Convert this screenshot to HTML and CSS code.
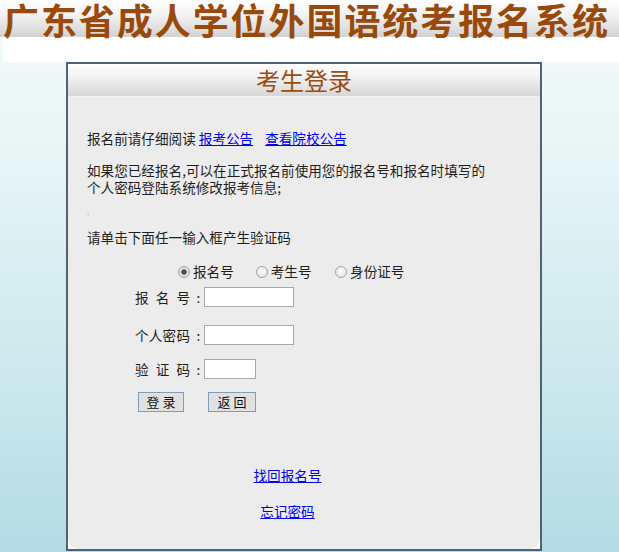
FILE: index.html
```html
<!DOCTYPE html>
<html lang="zh-CN">
<head>
<meta charset="utf-8">
<title>广东省成人学位外国语统考报名系统</title>
<link rel="stylesheet" href="styles.css">
</head>
<body>
<div class="page">
  <div class="banner"><h1 class="title">广东省成人学位外国语统考报名系统</h1></div>
  <div class="strip"></div>
  <div class="box">
    <div class="box-head">考生登录</div>
    <div class="box-body">
      <p class="line first">报名前请仔细阅读 <a href="#">报考公告</a><span class="sp"></span><a href="#">查看院校公告</a></p>
      <p class="line intro">如果您已经报名,可以在正式报名前使用您的报名号和报名时填写的<br>个人密码登陆系统修改报考信息;</p>
      <p class="line dot">.</p>
      <p class="line hint">请单击下面任一输入框产生验证码</p>
      <div class="radios">
        <label class="radio"><input type="radio" name="t" checked><span>报名号</span></label>
        <label class="radio"><input type="radio" name="t"><span>考生号</span></label>
        <label class="radio r3"><input type="radio" name="t"><span>身份证号</span></label>
      </div>
      <div class="field f1">
        <span class="lbl">报名号</span><span class="colon">:</span><input class="txt" type="text">
      </div>
      <div class="field f2">
        <span class="lbl">个人密码</span><span class="colon">:</span><input class="txt" type="password">
      </div>
      <div class="field f3">
        <span class="lbl">验证码</span><span class="colon">:</span><input class="txt short" type="text">
      </div>
      <div class="btns">
        <button class="btn" type="button">登 录</button>
        <button class="btn wide" type="button">返 回</button>
      </div>
      <div class="links">
        <a href="#" class="l1">找回报名号</a>
        <a href="#" class="l2">忘记密码</a>
      </div>
    </div>
  </div>
</div>
</body>
</html>
```
FILE: styles.css
```css
html, body {
  margin: 0;
  padding: 0;
}
body {
  width: 619px;
  height: 552px;
  overflow: hidden;
  background: linear-gradient(#f6fbfb 0%, #e6f4f5 30%, #c6e6ec 75%, #b4dbe5 100%);
  font-family: "Noto Sans CJK SC", "Noto Sans", sans-serif;
  font-size: 13.6px;
  color: #1e1e1e;
}
.banner {
  height: 37px;
  box-sizing: border-box;
  padding-top: 1px;
  background: linear-gradient(#ffffff 0%, #f2f2f2 40%, #d2d2d2 100%);
}
.title {
  margin: 0 0 0 3px;
  width: 605px;
  font-size: 36px;
  line-height: 37px;
  height: 37px;
  font-weight: 700;
  color: #994a0a;
  text-align: justify;
  text-align-last: justify;
}
.strip {
  height: 25px;
  margin-left: 3px;
  background: #ffffff;
}
.box {
  margin-left: 66px;
  width: 472px;
  border: 2px solid #526173;
  background: #ffffff;
}
.box-head {
  height: 32px;
  line-height: 32px;
  text-align: center;
  font-size: 24px;
  color: #9e4b0e;
  background: linear-gradient(#ffffff 0%, #f0f0f0 45%, #d6d6d6 100%);
  border-top-right-radius: 8px;
  border-bottom: 1px solid #f4f4f4;
}
.box-body {
  background: #ececec;
  padding: 1px 0 29px 19px;
  border-bottom-left-radius: 10px;
  border-bottom-right-radius: 10px;
}
.line {
  margin: 0;
  line-height: 17px;
}
.first { margin-top: 32px; }
.intro { margin-top: 15px; }
.dot {
  margin-top: 7px;
  font-size: 8px;
  color: #8a8a8a;
}
.hint { margin-top: 9px; }
a { color: #0000ee; text-decoration: underline; }
.sp { display: inline-block; width: 12px; }
.radios {
  margin-top: 17px;
  padding-left: 91px;
  display: flex;
  gap: 22px;
  height: 17px;
  line-height: 17px;
}
.radio {
  display: flex;
  align-items: center;
  gap: 3px;
}
.radio.r3 { margin-left: 1.5px; }
.radio input {
  appearance: none;
  -webkit-appearance: none;
  margin: 0;
  width: 12px;
  height: 12px;
  border-radius: 50%;
  border: 1px solid #a3a3a3;
  background: radial-gradient(circle at 50% 40%, #ffffff 0%, #e6e6e6 70%, #d6d6d6 100%);
  box-sizing: border-box;
}
.radio input:checked {
  background: radial-gradient(circle, #555555 0 2.5px, #e8e8e8 3px, #d9d9d9 100%);
}
.field {
  display: flex;
  align-items: center;
  height: 20px;
  padding-left: 48px;
  white-space: nowrap;
}
.f1 { margin-top: 7px; }
.f2 { margin-top: 18px; }
.f3 { margin-top: 14px; }
.lbl {
  display: inline-block;
  width: 55px;
  text-align: justify;
  text-align-last: justify;
  white-space: nowrap;
}
.colon {
  display: inline-block;
  width: 14px;
  text-align: center;
  padding-left: 3px;
  box-sizing: border-box;
}
.txt {
  margin: 0;
  width: 90px;
  height: 20px;
  box-sizing: border-box;
  border: 1px solid #a9a9a9;
  background: #ffffff;
  padding: 0 2px;
}
.txt.short { width: 52px; }
.btns {
  margin-top: 13px;
  padding-left: 51px;
  display: flex;
  gap: 24px;
}
.btn {
  margin: 0;
  width: 46px;
  height: 20px;
  box-sizing: border-box;
  border: 1px solid #7f9db9;
  background: #e1e1e1;
  font-family: "Noto Sans CJK SC", sans-serif;
  font-size: 13px;
  line-height: 18px;
  padding: 0;
  color: #111;
}
.btn.wide { width: 48px; }
.links {
  margin-top: 55px;
  display: flex;
  flex-direction: column;
  align-items: center;
  gap: 19px;
  line-height: 17px;
  padding-right: 52px;
}
```
